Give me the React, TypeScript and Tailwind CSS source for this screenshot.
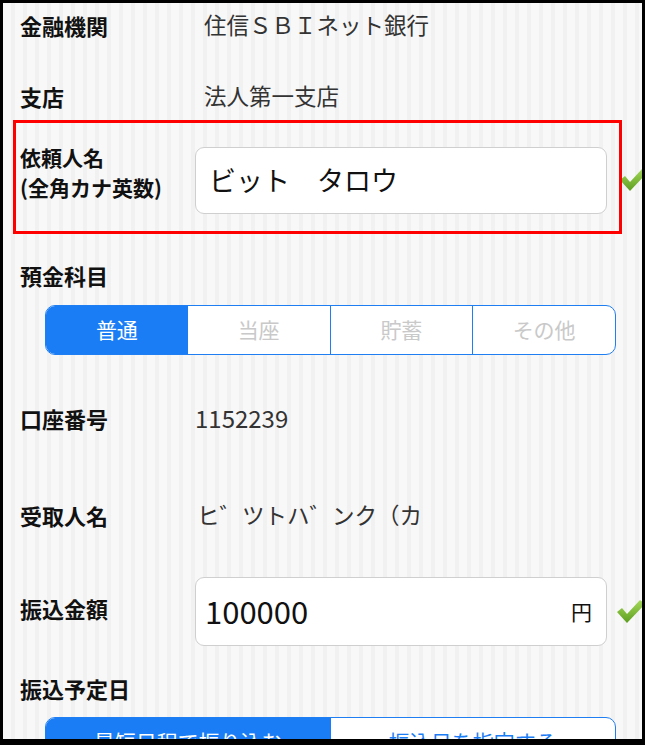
import React from "react";

const font = { fontFamily: '"Noto Sans CJK JP", "Noto Sans", sans-serif' };

function Check({ className }: { className?: string }) {
  return (
    <svg viewBox="0 0 30 26" className={className} width="30" height="26">
      <defs>
        <linearGradient id="g" x1="0" y1="0" x2="0" y2="1">
          <stop offset="0" stopColor="#a6d95a" />
          <stop offset="1" stopColor="#5c9e1f" />
        </linearGradient>
      </defs>
      <path d="M1 13 L6 9 L11 15 L24 1 L29 5 L11 24 Z" fill="url(#g)" />
    </svg>
  );
}

function Row({ label, value, valueCls, mt }: { label: string; value: string; valueCls: string; mt: string }) {
  return (
    <div className={`flex items-center h-[40px] ${mt}`}>
      <div className="w-[180px] shrink-0 pl-[17px] text-[22px] font-bold text-[#111]">{label}</div>
      <div className={`${valueCls} text-[#333] whitespace-pre`}>{value}</div>
    </div>
  );
}

export default function App() {
  return (
    <div className="w-[645px] h-[745px] bg-black pt-[3px] pl-[3px] pr-[3px] pb-[6px]" style={font}>
      <div className="w-full h-full overflow-hidden bg-[repeating-linear-gradient(90deg,#f8f8f8_0px,#f8f8f8_8px,#f1f1f1_8px,#f1f1f1_12px)]">
        <Row label="金融機関" value="住信ＳＢＩネット銀行" valueCls="ml-[21px] text-[22.5px]" mt="mt-[2px]" />
        <Row label="支店" value="法人第一支店" valueCls="ml-[21px] text-[22.5px]" mt="mt-[31px]" />

        <div className="relative mt-[4px] h-[114px] flex items-center">
          <div className="w-[192px] shrink-0 pl-[17px] text-[21px] font-bold text-[#111] leading-[30px] -mt-[10px]">
            <div>依頼人名</div>
            <div>(全角カナ英数)</div>
          </div>
          <div className="w-[412px] shrink-0 h-[67px] mt-[7px] bg-white border border-[#cfcfcf] rounded-[9px] flex items-center pl-[13px] text-[27px] text-[#111] whitespace-pre">
            ビット　タロウ
          </div>
          <Check className="ml-[12px] mt-[6px] shrink-0" />
          <div className="absolute left-[10px] top-0 w-[609px] h-[114px] border-[3px] border-[#ff0000]" />
        </div>

        <div className="flex items-center h-[40px] mt-[21px] pl-[17px] text-[22px] font-bold text-[#111]">預金科目</div>

        <div className="mt-[10px] ml-[42px] w-[571px] h-[50px] flex border-[1.5px] border-[#1f7ef2] rounded-[10px] overflow-hidden bg-white text-[21px]">
          <div className="flex-1 flex items-center justify-center bg-[#1a7df5] text-white">普通</div>
          <div className="flex-1 flex items-center justify-center text-[#c9c9c9]">当座</div>
          <div className="flex-1 flex items-center justify-center text-[#c9c9c9] border-l-[1.5px] border-[#1f7ef2]">貯蓄</div>
          <div className="flex-1 flex items-center justify-center text-[#c9c9c9] border-l-[1.5px] border-[#1f7ef2]">その他</div>
        </div>

        <Row label="口座番号" value="1152239" valueCls="ml-[12px] text-[24px]" mt="mt-[43px]" />
        <Row label="受取人名" value="ヒ゛ツトハ゛ンク（カ" valueCls="ml-[14px] text-[22.5px]" mt="mt-[57px]" />

        <div className="flex items-center h-[69px] mt-[42px]">
          <div className="w-[192px] shrink-0 pl-[17px] text-[22px] font-bold text-[#111] -mt-[6px]">振込金額</div>
          <div className="w-[412px] shrink-0 h-[69px] bg-white border border-[#cfcfcf] rounded-[9px] flex items-center pl-[9px] pr-[14px] text-[#111]">
            <span className="text-[31px] flex-1">100000</span>
            <span className="text-[21px]">円</span>
          </div>
          <Check className="ml-[9px] shrink-0" />
        </div>

        <div className="flex items-center h-[40px] mt-[22px] pl-[17px] text-[22px] font-bold text-[#111]">振込予定日</div>

        <div className="mt-[9px] ml-[42px] w-[571px] h-[50px] flex border-[1.5px] border-[#1f7ef2] rounded-[10px] overflow-hidden bg-white text-[21px]">
          <div className="flex-1 flex items-center justify-center bg-[#1a7df5] text-white">最短日程で振り込む</div>
          <div className="flex-1 flex items-center justify-center text-[#1a7df5]">振込日を指定する</div>
        </div>
      </div>
    </div>
  );
}
